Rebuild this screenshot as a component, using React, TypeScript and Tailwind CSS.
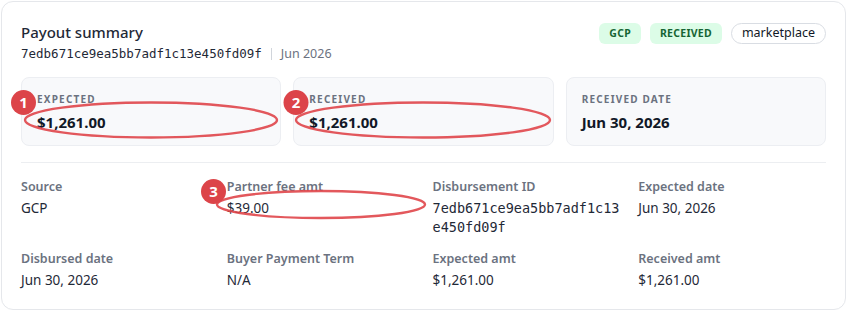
import React from 'react';

const sans = { fontFamily: '"Noto Sans", "Open Sans", sans-serif' };
const mono = '[font-family:"DejaVu_Sans_Mono",monospace]';

const stats = [
  { label: 'Expected', value: '$1,261.00' },
  { label: 'Received', value: '$1,261.00' },
  { label: 'Received date', value: 'Jun 30, 2026' },
];

const details: { label: string; value: string; mono?: boolean }[] = [
  { label: 'Source', value: 'GCP' },
  { label: 'Partner fee amt', value: '$39.00' },
  { label: 'Disbursement ID', value: '7edb671ce9ea5bb7adf1c13e450fd09f', mono: true },
  { label: 'Expected date', value: 'Jun 30, 2026' },
  { label: 'Disbursed date', value: 'Jun 30, 2026' },
  { label: 'Buyer Payment Term', value: 'N/A' },
  { label: 'Expected amt', value: '$1,261.00' },
  { label: 'Received amt', value: '$1,261.00' },
];

function Marker({ n, cx, cy }: { n: number; cx: number; cy: number }) {
  return (
    <g>
      <circle cx={cx} cy={cy} r={12.5} fill="#dc4449" />
      <text
        x={cx}
        y={cy + 5.5}
        textAnchor="middle"
        fontSize="15"
        fontWeight="700"
        fill="#fff"
        fontFamily='"Noto Sans", sans-serif'
      >
        {n}
      </text>
    </g>
  );
}

function Annotations() {
  return (
    <svg className="pointer-events-none absolute left-0 top-0" width="846" height="311" viewBox="0 0 846 311">
      <g fill="none" stroke="#e0464b" strokeWidth="2.4" opacity="0.9">
        <ellipse cx="151" cy="119" rx="126" ry="17.5" />
        <ellipse cx="423" cy="119" rx="127" ry="17.5" />
        <ellipse cx="321" cy="203.5" rx="104" ry="13.5" />
      </g>
      <Marker n={1} cx={23.5} cy={101.5} />
      <Marker n={2} cx={296} cy={101.5} />
      <Marker n={3} cx={213.5} cy={190.5} />
    </svg>
  );
}

export default function App() {
  return (
    <div className="relative h-[311px] w-[846px] bg-white" style={sans}>
      <div className="ml-px mt-px h-[309px] w-[845px] rounded-xl border border-[#e5e7eb] bg-white px-[19px] pt-[19px]">
        <div className="flex items-start justify-between">
          <div>
            <div className="text-[15px] font-medium leading-[22px] text-[#1f2937]">Payout summary</div>
            <div className="mt-[2px] flex items-center leading-[18px]">
              <span className={`${mono} text-[12.5px] text-[#1f2937]`}>7edb671ce9ea5bb7adf1c13e450fd09f</span>
              <span className="mx-[9px] h-3 w-px bg-[#d1d5db]" />
              <span className="text-[12.5px] text-[#6b7280]">Jun 2026</span>
            </div>
          </div>
          <div className="mt-[2px] flex items-center gap-[9px]">
            <span className="flex h-[21px] items-center rounded-md bg-[#dcfce7] px-[10px] text-[10.5px] font-bold tracking-wide text-[#166534]">
              GCP
            </span>
            <span className="flex h-[21px] items-center rounded-md bg-[#dcfce7] px-[10px] text-[10.5px] font-bold tracking-wide text-[#166534]">
              RECEIVED
            </span>
            <span className="flex h-[21px] items-center rounded-full border border-[#d9dde3] bg-white px-[10px] text-[12.5px] text-[#111827]">
              marketplace
            </span>
          </div>
        </div>

        <div className="mt-[14px] grid grid-cols-3 gap-3">
          {stats.map((s) => (
            <div key={s.label} className="h-[69px] rounded-lg border border-[#eceef2] bg-[#f8f9fb] px-[15px] pt-[13px]">
              <div className="text-[10px] font-bold uppercase leading-4 tracking-[0.12em] text-[#6b7280]">{s.label}</div>
              <div className="mt-1 text-[15px] font-bold leading-[22px] text-[#111827]">{s.value}</div>
            </div>
          ))}
        </div>

        <div className="mt-4 border-t border-[#eceef1]" />

        <div className="grid grid-cols-4 gap-x-[18px] gap-y-[14px] pt-[16px]">
          {details.map((d) => (
            <div key={d.label}>
              <div className="text-[12.5px] font-semibold leading-4 text-[#6b7280]">{d.label}</div>
              <div
                className={`mt-[4px] break-all leading-[19px] text-[#1f2937] ${
                  d.mono ? `${mono} text-[13.5px]` : 'text-[13.5px]'
                }`}
              >
                {d.value}
              </div>
            </div>
          ))}
        </div>
      </div>
      <Annotations />
    </div>
  );
}
